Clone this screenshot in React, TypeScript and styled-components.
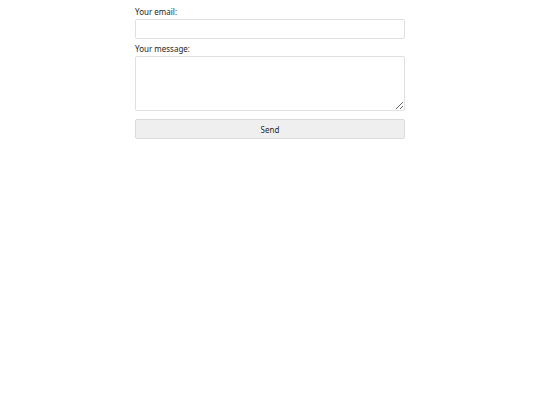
import React from "react";
import styled, { createGlobalStyle } from "styled-components";

// ------ Global ------

const GlobalStyle = createGlobalStyle`
  html, body {
    margin: 0;
    padding: 0;
    background: #ffffff;
  }
  body {
    font-family: "Noto Sans", "Open Sans", sans-serif;
    color: #1e1e1e;
  }
`;

// ------ Styled Components ------

const Form = styled.form`
  width: 270px;
  margin: 0 auto;
  padding-top: 7px;
  display: flex;
  flex-direction: column;
`;

const Label = styled.label`
  display: block;
  font-size: 8px;
  line-height: 10px;
  margin-bottom: 2px;
`;

const Field = styled.div`
  display: flex;
  flex-direction: column;
  margin-bottom: 5px;
`;

const Input = styled.input`
  box-sizing: border-box;
  width: 100%;
  height: 20px;
  border: 1px solid #e0e0e0;
  border-radius: 2px;
  padding: 2px 4px;
  font: inherit;
  font-size: 8px;
  outline: none;
`;

const TextArea = styled.textarea`
  box-sizing: border-box;
  width: 100%;
  height: 55px;
  border: 1px solid #e0e0e0;
  border-radius: 2px;
  padding: 2px 4px;
  font: inherit;
  font-size: 8px;
  outline: none;
  resize: vertical;
  display: block;
`;

const Button = styled.button`
  box-sizing: border-box;
  width: 100%;
  height: 20px;
  margin-top: 3px;
  border: 1px solid #dadada;
  border-radius: 2px;
  background: #efefef;
  color: #2a2a2a;
  font-family: inherit;
  font-size: 8px;
  cursor: pointer;
`;

// ------ App Component ------

const App = () => {
  return (
    <>
      <GlobalStyle />
      <Form onSubmit={(e) => e.preventDefault()}>
        <Field>
          <Label htmlFor="email">Your email:</Label>
          <Input id="email" type="email" />
        </Field>
        <Field>
          <Label htmlFor="message">Your message:</Label>
          <TextArea id="message" />
        </Field>
        <Button type="submit">Send</Button>
      </Form>
    </>
  );
};
export default App;
